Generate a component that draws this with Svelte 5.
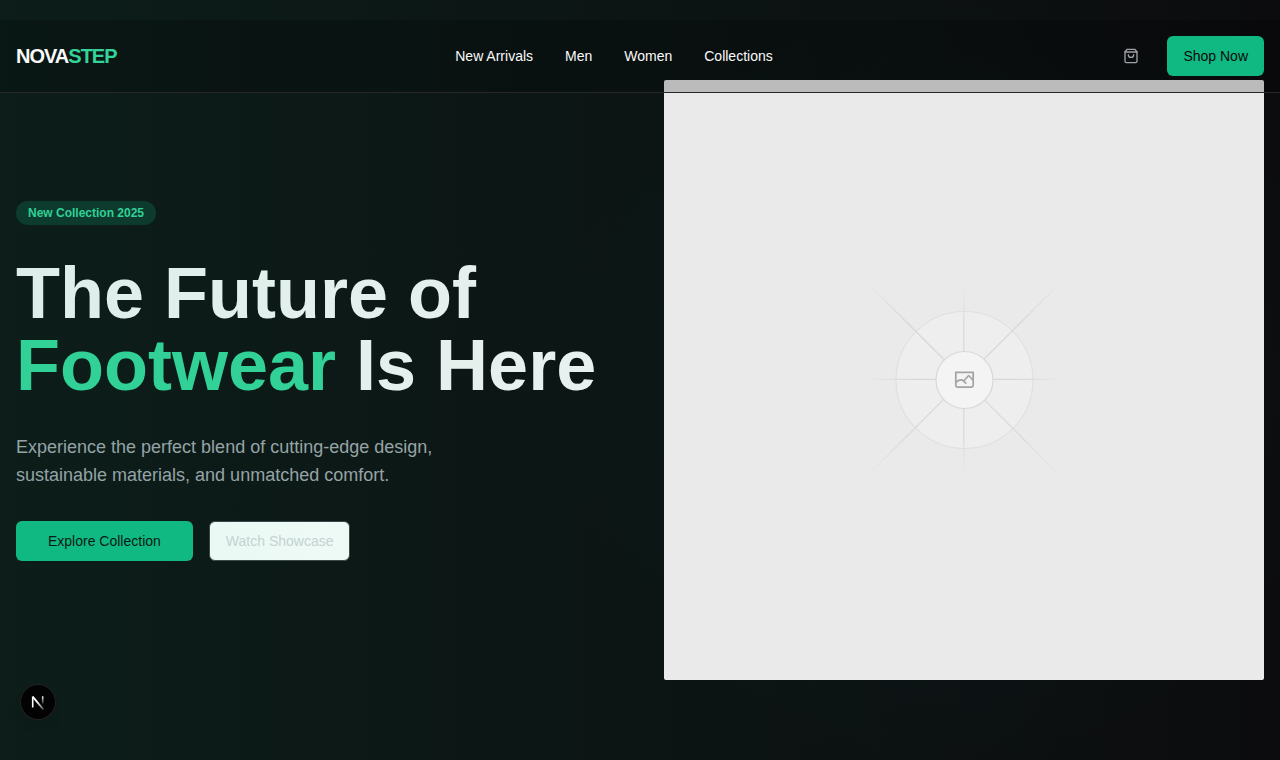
<script>
  const links = ['New Arrivals', 'Men', 'Women', 'Collections'];
  const rays = [0, 45, 90, 135, 180, 225, 270, 315];
</script>

<div class="page">
  <header>
    <a class="logo" href="#home">NOVA<span>STEP</span></a>
    <nav aria-label="Main">
      {#each links as link}
        <a href="#shop">{link}</a>
      {/each}
    </nav>
    <div class="actions">
      <button class="icon-button" aria-label="Shopping bag">
        <svg width="16" height="16" viewBox="0 0 24 24" fill="none" stroke="currentColor" stroke-width="2" stroke-linecap="round" stroke-linejoin="round">
          <path d="M6 2 3 6v14a2 2 0 0 0 2 2h14a2 2 0 0 0 2-2V6l-3-4Z" />
          <path d="M3 6h18" />
          <path d="M16 10a4 4 0 0 1-8 0" />
        </svg>
      </button>
      <button class="primary">Shop Now</button>
    </div>
  </header>

  <main class="hero">
    <div class="copy">
      <div class="badge">New Collection 2025</div>
      <h1>The Future of <span>Footwear</span> Is Here</h1>
      <p>Experience the perfect blend of cutting-edge design, sustainable materials, and unmatched comfort.</p>
      <div class="buttons">
        <button class="primary wide">Explore Collection</button>
        <button class="outline">Watch Showcase</button>
      </div>
    </div>

    <div class="media">
      <svg viewBox="0 0 600 600" role="img" aria-label="Product placeholder">
        <defs>
          <linearGradient id="ray" gradientUnits="userSpaceOnUse" x1="28" y1="0" x2="97" y2="0">
            <stop offset="0" stop-color="#d8d8d8" />
            <stop offset="0.4" stop-color="#d8d8d8" />
            <stop offset="1" stop-color="#d8d8d8" stop-opacity="0" />
          </linearGradient>
          <linearGradient id="long-ray" gradientUnits="userSpaceOnUse" x1="28" y1="0" x2="138" y2="0">
            <stop offset="0" stop-color="#d8d8d8" />
            <stop offset="0.5" stop-color="#d8d8d8" />
            <stop offset="1" stop-color="#d8d8d8" stop-opacity="0" />
          </linearGradient>
        </defs>
        <rect width="600" height="600" rx="2" fill="#eaeaea" />
        <circle cx="300.5" cy="300" r="68.5" fill="#eeeeee" stroke="#e0e0e0" stroke-width="1.2" />
        {#each rays as angle}
          <path
            d="M28 -0.6H{angle % 90 ? 138 : 97}V0.6H28Z"
            fill={angle % 90 ? 'url(#long-ray)' : 'url(#ray)'}
            transform="translate(299.8 299.3) rotate({angle})"
          />
        {/each}
        <circle cx="300.5" cy="300" r="28.5" fill="#f4f4f4" stroke="#d8d8d8" stroke-width="1.2" />
        <g fill="none" stroke="#a3a3a3" stroke-width="1.7">
          <path d="M291.8 292.3H309.2V305.6Q309.2 307.2 307.6 307.2H293.4Q291.8 307.2 291.8 305.6Z" />
          <path d="M292 302.4L294.4 300.5Q297.5 299.2 299.4 300.8L302.3 303.6M299.7 301L304.2 296Q304.7 295.6 305.2 296L309 300.3" />
        </g>
      </svg>
    </div>
  </main>

  <button class="dev" aria-label="Open developer tools">
    <svg width="36" height="36" viewBox="0 0 36 36" fill="none">
      <defs>
        <linearGradient id="stem" x1="0" y1="12" x2="0" y2="21" gradientUnits="userSpaceOnUse">
          <stop stop-color="#fff" />
          <stop offset="1" stop-color="#fff" stop-opacity="0" />
        </linearGradient>
        <linearGradient id="diagonal" x1="18" y1="18" x2="25" y2="27" gradientUnits="userSpaceOnUse">
          <stop stop-color="#fff" />
          <stop offset="1" stop-color="#fff" stop-opacity="0.1" />
        </linearGradient>
      </defs>
      <path d="M12.7 23.5V12.6" stroke="#fff" stroke-width="1.6" />
      <path d="M12.7 12.6L23.4 25.5" stroke="url(#diagonal)" stroke-width="1.8" />
      <path d="M22.7 12.3V20.5" stroke="url(#stem)" stroke-width="1.6" />
    </svg>
  </button>
</div>

<style>
  :global(body) {
    margin: 0;
    background: #050506;
  }

  .page {
    position: relative;
    font-family: "Liberation Sans", Arial, sans-serif;
    font-size: 14px;
    line-height: 20px;
    color: #fafafa;
  }

  a {
    color: inherit;
    text-decoration: none;
  }

  button {
    box-sizing: border-box;
    height: 40px;
    padding: 0 16px;
    border: 0;
    border-radius: 6px;
    font: inherit;
    cursor: pointer;
  }

  header {
    position: absolute;
    z-index: 3;
    top: 20px;
    left: 0;
    right: 0;
    display: flex;
    align-items: center;
    justify-content: space-between;
    padding: 16px;
    background: rgb(0 0 0 / 20%);
    border-bottom: 1px solid #27272a;
  }

  .logo {
    font-size: 20px;
    line-height: 28px;
    font-weight: 700;
    letter-spacing: -1px;
  }

  .logo span,
  h1 span {
    color: #34d399;
  }

  nav {
    display: flex;
    gap: 32px;
  }

  .actions {
    display: flex;
    gap: 16px;
  }

  .icon-button {
    display: grid;
    place-items: center;
    width: 40px;
    padding: 0;
    background: none;
    color: #a1a1aa;
  }

  .primary {
    background: #10b981;
    color: #09090b;
  }

  .wide {
    padding: 0 32px;
  }

  .outline {
    border: 1px solid #3f3f46;
    background: #fff;
    color: #d4d4d8;
  }

  .hero {
    position: relative;
    box-sizing: border-box;
    min-height: 100vh;
    display: grid;
    grid-template-columns: 1fr 1fr;
    align-items: center;
    gap: 48px;
    padding: 80px 16px;
    background:
      radial-gradient(circle at 75% 50%, rgb(16 50 60 / 20%), transparent 400px),
      #0c0c0e;
  }

  .hero::after {
    content: "";
    position: absolute;
    z-index: 1;
    inset: 0;
    background: linear-gradient(to right, rgb(16 185 129 / 10%), transparent);
    pointer-events: none;
  }

  .copy {
    display: flex;
    flex-direction: column;
    align-items: flex-start;
    gap: 32px;
    padding-top: 2px;
  }

  .badge {
    padding: 4px 12px;
    border-radius: 12px;
    background: rgb(16 185 129 / 20%);
    color: #34d399;
    font-size: 12px;
    line-height: 16px;
    font-weight: 700;
  }

  h1 {
    margin: 0;
    font-size: 72px;
    line-height: 72px;
    font-weight: 700;
    color: #f4f4f5;
  }

  p {
    margin: 0;
    max-width: 480px;
    font-size: 18px;
    line-height: 28px;
    color: #a1a1aa;
  }

  .buttons {
    display: flex;
    gap: 16px;
  }

  .media {
    position: relative;
    z-index: 2;
  }

  .media svg {
    display: block;
    width: 100%;
  }

  .dev {
    position: fixed;
    z-index: 4;
    left: 20px;
    bottom: 40px;
    width: 36px;
    height: 36px;
    padding: 0;
    border-radius: 50%;
    background: #030303;
    box-shadow: inset 0 0 0 1px #242424, 0 8px 16px -8px rgb(0 0 0 / 24%);
  }

  .dev svg {
    display: block;
  }

  @media (max-width: 900px) {
    .hero {
      grid-template-columns: 1fr;
      padding-top: 128px;
    }

    nav {
      display: none;
    }

    h1 {
      font-size: 48px;
      line-height: 48px;
    }
  }
</style>
